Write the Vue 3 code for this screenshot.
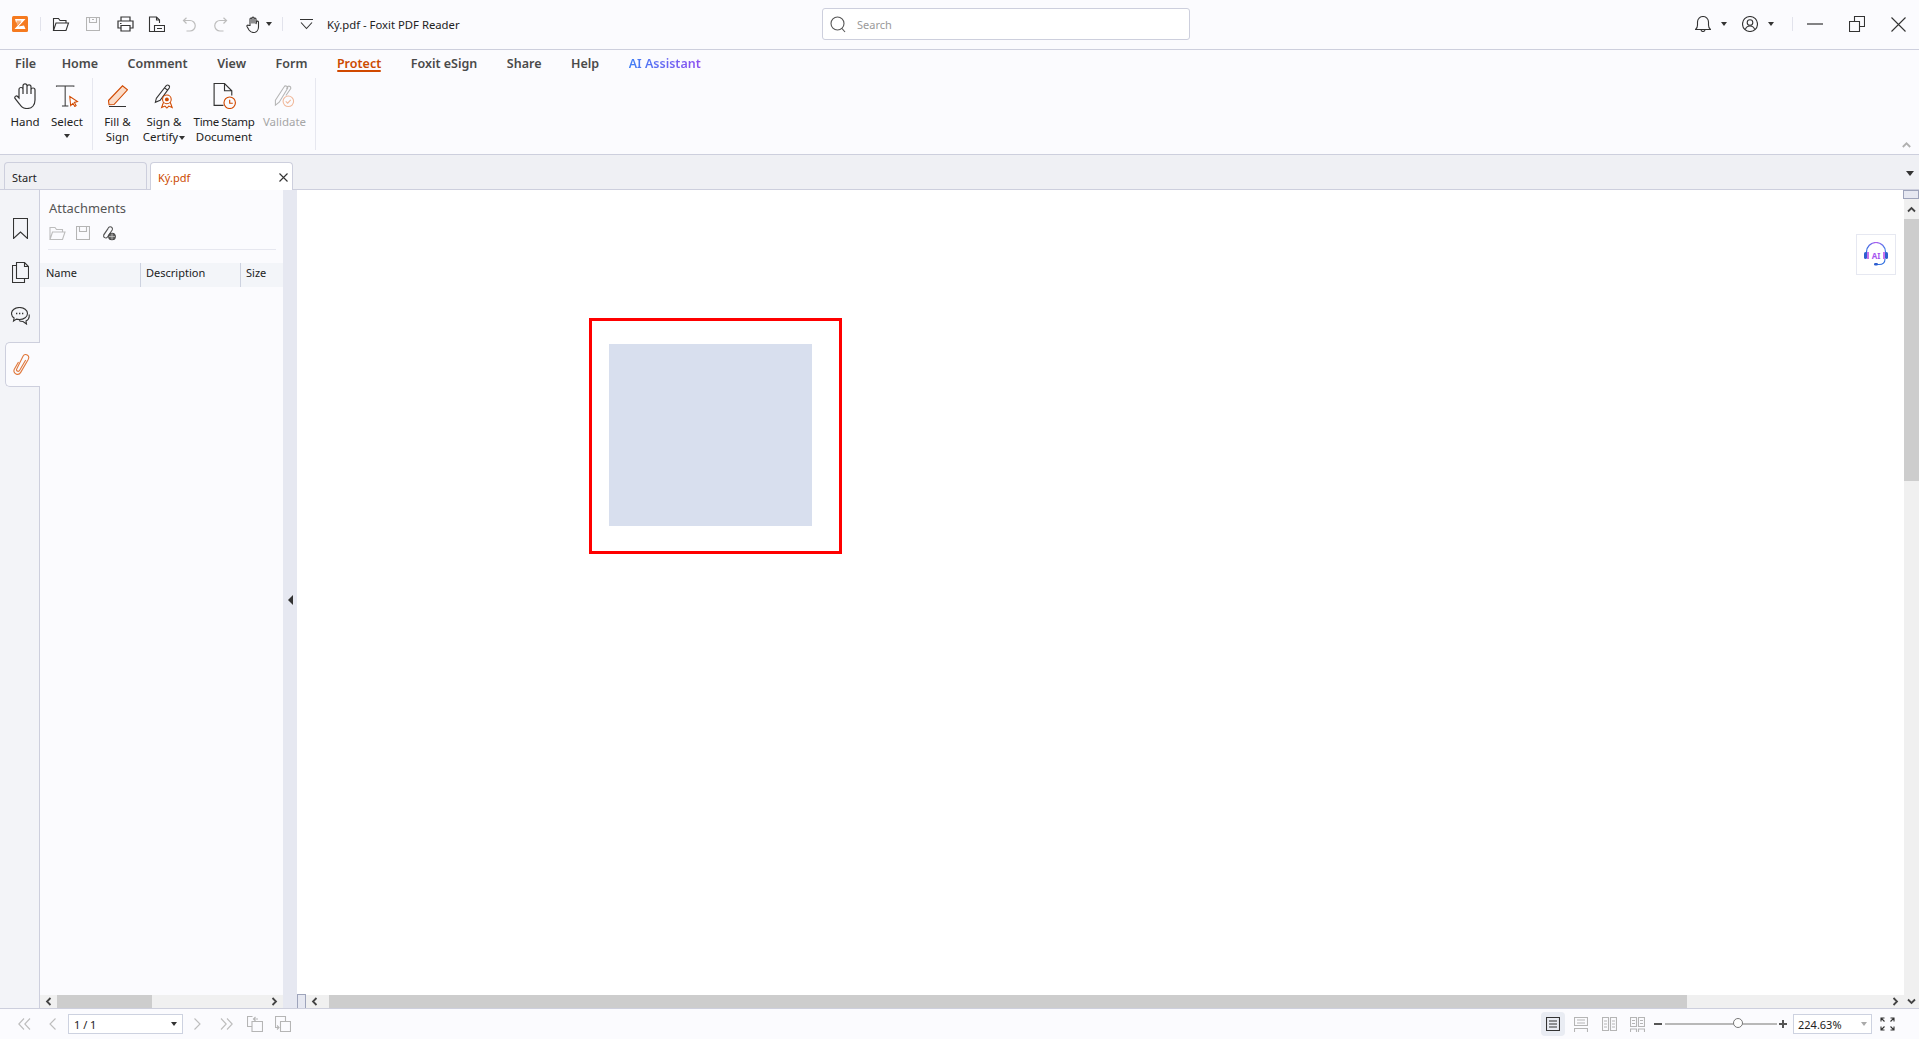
<script setup>
const menus = ["File", "Home", "Comment", "View", "Form", "Protect", "Foxit eSign", "Share", "Help"];
const columns = [
  { label: "Name", width: 101 },
  { label: "Description", width: 100 },
  { label: "Size", width: 42 },
];
</script>

<template>
  <div class="app">
    <!-- title bar -->
    <header class="titlebar">
      <svg class="logo" width="16" height="16" viewBox="0 0 16 16">
        <rect width="16" height="16" rx="1.5" fill="#f57a1f" />
        <path d="M3 3h10.500L6.500 10.500 12 9.500 13.500 13H2.500L9.500 5.500 4 6.500Z" fill="#fff" />
        <path d="M4.500 4.600h5L5 9.500Z" fill="#f9b27c" />
      </svg>
      <span class="vsep sep-a"></span>
      <svg class="ti open" width="18" height="16" viewBox="0 0 18 16" fill="none" stroke="#333" stroke-width="1.1">
        <path d="M1.500 14.500V2.500h5l1.500 2h6v2.500" />
        <path d="M1.500 14.500 4 7h12.500l-2.500 7.500Z" />
      </svg>
      <svg class="ti save" width="14" height="14" viewBox="0 0 14 14" fill="none" stroke="#b5b5b5" stroke-width="1.1">
        <path d="M.5.500h13v13H.5Z" />
        <path d="M3.500.500v5h7v-5M6 2.500h2" />
      </svg>
      <svg class="ti print" width="17" height="16" viewBox="0 0 17 16" fill="none" stroke="#333" stroke-width="1.2">
        <path d="M4 5V1h9v4M4 12H1V5h15v7h-3" />
        <path d="M4 9.500h9V15H4ZM3 7.500h1.500" />
      </svg>
      <svg class="ti props" width="17" height="17" viewBox="0 0 17 17" fill="none" stroke="#333" stroke-width="1.1">
        <path d="M6 15.500H1.500V1h7l3 3v3" />
        <path d="M8.500 1v3h3M6.500 9.500h10v6h-10ZM9 12.500h5" />
      </svg>
      <svg class="ti undo" width="14" height="15" viewBox="0 0 14 15" fill="none" stroke="#bdbdbd" stroke-width="1.2">
        <path d="M4.500 14H8a5.200 5.200 0 0 0 0-10.500H1.500M4.500.800 1.500 3.500 4.500 6.500" />
      </svg>
      <svg class="ti redo" width="14" height="15" viewBox="0 0 14 15" fill="none" stroke="#bdbdbd" stroke-width="1.2">
        <path d="M9.500 14H6a5.200 5.200 0 0 1 0-10.500h6.500M9.500.800l3 2.700-3 3" />
      </svg>
      <svg class="ti touch" width="14" height="17" viewBox="0 0 14 17" fill="none" stroke="#333" stroke-width="1.1">
        <path d="M4 9.500V3a1 1 0 0 1 2 0v4.500V2a1 1 0 0 1 2 0v5.500V3a1 1 0 0 1 2 0v5l.5-2a1 1 0 0 1 2 .3V11c0 3-2 5.500-5 5.500-2.500 0-3.500-1-4.500-2.500L1 10.500c-.5-1 1-2 1.800-1Z" />
      </svg>
      <span class="caret touch-caret"></span>
      <span class="vsep sep-b"></span>
      <svg class="ti more" width="13" height="11" viewBox="0 0 13 11" fill="none" stroke="#333" stroke-width="1.1">
        <path d="M0 .5h13M1 3.500l5.500 6 5.500-6" />
      </svg>
      <span class="doc-title">Ký.pdf - Foxit PDF Reader</span>

      <label class="search">
        <svg width="16" height="17" viewBox="0 0 16 17" fill="none" stroke="#555" stroke-width="1.1">
          <circle cx="7.500" cy="7.500" r="6.500" /><path d="m12 12.500 3 3.500" />
        </svg>
        <span>Search</span>
      </label>

      <div class="win-right">
        <svg width="16" height="16" viewBox="0 0 16 16" fill="none" stroke="#333" stroke-width="1.1">
          <path d="M.5 13.500h15c-1.500-1-2-2.500-2-4.500V6A5.500 5.500 0 0 0 2.500 6v3c0 2-.5 3.500-2 4.500ZM6 13.500a2 2 0 0 0 4 0" />
        </svg>
        <span class="caret bell-caret"></span>
        <svg class="user" width="16" height="16" viewBox="0 0 16 16" fill="none" stroke="#333" stroke-width="1.1">
          <circle cx="8" cy="8" r="7.500" /><circle cx="8" cy="6.500" r="2.800" /><path d="M3.300 13.500c.7-2.200 2.500-3.500 4.700-3.500s4 1.300 4.700 3.500" />
        </svg>
        <span class="caret user-caret"></span>
        <span class="vsep sep-c"></span>
        <svg class="min" width="16" height="2" viewBox="0 0 16 2"><path d="M0 1h16" stroke="#333" stroke-width="1.200" /></svg>
        <svg class="restore" width="16" height="16" viewBox="0 0 16 16" fill="none" stroke="#333" stroke-width="1.100">
          <path d="M.5 5.500h10v10H.5ZM5.500 5.500v-5h10v10h-5" />
        </svg>
        <svg class="close" width="15" height="15" viewBox="0 0 15 15" fill="none" stroke="#333" stroke-width="1.100">
          <path d="m.5.500 14 14M14.500.500l-14 14" />
        </svg>
      </div>
    </header>

    <!-- menu -->
    <nav class="menu">
      <span v-for="m in menus" :key="m" class="menu-item" :class="{ active: m === 'Protect', home: m === 'Home' }">{{ m }}</span>
      <span class="menu-item ai">AI Assistant</span>
    </nav>

    <!-- ribbon -->
    <section class="ribbon">
      <div class="rbtn w34">
        <span class="ico">
          <svg width="22" height="26" viewBox="0 0 22 26" fill="none" stroke="#333" stroke-width="1.200">
            <path d="M5 15V6.500a2 2 0 0 1 4 0V11V2.800a2 2 0 0 1 4 0V11V3.800a2 2 0 0 1 4 0V11V7a2 2 0 0 1 4 0V17c0 5-3 8.500-8 8.500-3.500 0-5.800-1.500-7.500-4.500L1 15.500c-.9-1.700 1.300-3.300 2.600-2L5 15Z" />
          </svg>
        </span>
        <span class="lbl">Hand</span>
      </div>
      <div class="rbtn w34">
        <span class="ico">
          <svg width="24" height="22" viewBox="0 0 25 24" fill="none">
            <path d="M1 2V1h19v1M10.500 1v22M7 23h7" stroke="#333" stroke-width="1.100" />
            <path d="M15.500 12.500 24 18l-3.500 1 2 3.500-1.500 1-2-3.500-2.500 2.500Z" stroke="#d14900" stroke-width="1.100" fill="#fff" />
          </svg>
        </span>
        <span class="lbl">Select</span>
        <span class="caret select-caret"></span>
      </div>
      <span class="rsep"></span>
      <div class="rbtn w33">
        <span class="ico">
          <svg width="20" height="22" viewBox="0 0 20 22" fill="none">
            <path d="M.5 15.500 14.500.800l5 4L6 19.500l-5 .2Z" stroke="#d14900" stroke-width="1.100" fill="#fbdcc8" />
            <path d="M1 21.500h17" stroke="#333" stroke-width="1" />
          </svg>
        </span>
        <span class="lbl">Fill &amp;<br />Sign</span>
      </div>
      <div class="rbtn w44">
        <span class="ico">
          <svg width="20" height="25" viewBox="0 0 20 26" fill="none" stroke-width="1.100">
            <path d="M2 15 12.500 1.500a2 2 0 0 1 3 2.500L6 17l-5 2Z M10.500 4l3.500 2.500" stroke="#333" />
            <circle cx="13" cy="16" r="4.500" stroke="#d14900" />
            <circle cx="13" cy="16" r="2" fill="#d14900" />
            <path d="m9.500 19-2 5.500 3.500-1.500 2 2 2-2 3.500 1.500-2-5.500" stroke="#d14900" />
          </svg>
        </span>
        <span class="lbl">Sign &amp;<br />Certify<i class="caret inline"></i></span>
      </div>
      <div class="rbtn w60">
        <span class="ico">
          <svg width="23" height="26" viewBox="0 0 22 25" fill="none" stroke-width="1.100">
            <path d="M10 21.500H1V.5h10l7 7V12M11 .5v7h7" stroke="#333" />
            <circle cx="16" cy="19" r="5.500" stroke="#d14900" />
            <path d="M16 16v3.500h3" stroke="#d14900" />
          </svg>
        </span>
        <span class="lbl"><span class="tight">Time Stamp</span><br />Document</span>
      </div>
      <div class="rbtn w45 off">
        <span class="ico">
          <svg width="21" height="23" viewBox="0 0 21 24" fill="none" stroke-width="1.100">
            <path d="M1 16 10 2a2 2 0 0 1 3.500 2L5 18l-4 3Zm11.500-12 1.500-2.500a2 2 0 0 1 3 2.200L12 11" stroke="#b5b5b5" />
            <circle cx="14.500" cy="17" r="5.500" stroke="#f0b89a" />
            <path d="m11.800 17 2 2 3.200-3.500" stroke="#f0b89a" />
          </svg>
        </span>
        <span class="lbl">Validate</span>
      </div>
      <span class="rsep"></span>
      <svg class="collapse" width="9" height="6" viewBox="0 0 9 6" fill="none" stroke="#b0b0b0" stroke-width="1.800">
        <path d="m.8 5 3.700-3.700L8.200 5" />
      </svg>
    </section>

    <!-- tabs -->
    <div class="tabs">
      <div class="tab">Start</div>
      <div class="tab current">
        <span>Ký.pdf</span>
        <svg width="9" height="9" viewBox="0 0 9 9" stroke="#333" stroke-width="1.100"><path d="m.5.500 8 8M8.500.500l-8 8" /></svg>
      </div>
      <span class="caret big tabs-caret"></span>
    </div>

    <!-- main area -->
    <main class="workspace">
      <aside class="rail">
        <div class="rail-item">
          <svg width="15" height="21" viewBox="0 0 15 21" fill="none" stroke="#333" stroke-width="1.100">
            <path d="M.5.500h14v20l-7-6.500-7 6.500Z" />
          </svg>
        </div>
        <div class="rail-item">
          <svg width="17" height="21" viewBox="0 0 17 21" fill="none" stroke="#333" stroke-width="1.100">
            <path d="M4.500 3.500H.5v17h12v-4" /><path d="M4.500.5h8l4 4v12h-12ZM12.500.5v4h4" />
          </svg>
        </div>
        <div class="rail-item">
          <svg width="19" height="18" viewBox="0 0 19 18" fill="none" stroke="#333" stroke-width="1.100">
            <path d="M8.500.5c4.400 0 8 2.700 8 6s-3.600 6-8 6c-1 0-2-.1-3-.4L2.500 14l.6-3C1.500 10 .5 8.300.5 6.500c0-3.300 3.600-6 8-6Z" />
            <path d="M18 7.500c.8 3-1 5.500-3 6.500l.5 3-3.500-2.500c-1.500 0-3-.3-4-1" />
            <path d="M5 6.500h1.300M8 6.500h1.300M11 6.500h1.300" stroke-width="1.500" />
          </svg>
        </div>
        <div class="rail-item current">
          <svg width="17" height="21" viewBox="0 0 17 21" fill="none" stroke="#e0783c" stroke-width="1.100">
            <path d="M5.500 8 1.300 15.200c-1 2 0 3.900 1.700 4.700 1.800.9 3.700.2 4.700-1.500l7.500-13c1-1.900.4-3.600-1-4.400-1.500-.8-3.200-.3-4.200 1.300L3.700 15c-.6 1 .1 1.900 1 2.200.8.300 1.500 0 2-.9l6-10.300" />
          </svg>
        </div>
      </aside>

      <section class="panel">
        <h2 class="panel-title">Attachments</h2>
        <div class="panel-tools">
          <svg width="17" height="14" viewBox="0 0 17 14" fill="none" stroke="#bdbdbd" stroke-width="1.100">
            <path d="M1 13.500V1.500h5l1.500 2h6V6M1 13.500 3.500 6H16l-2.500 7.500Z" />
          </svg>
          <svg width="14" height="14" viewBox="0 0 14 14" fill="none" stroke="#b5b5b5" stroke-width="1.100">
            <path d="M.5.500h13v13H.5Z" /><path d="M3.500.500v5h7v-5" />
          </svg>
          <svg width="14" height="15" viewBox="0 0 14 15" fill="none" stroke="#555" stroke-width="1.100">
            <path d="M1.500 9 6.500 1.700c1-1.300 2.600-1.200 3.500 0 .6.800.6 1.600.2 2.300L5.500 11c-.6 1-1.900 1.200-2.800.6C1.500 11 1.300 9.800 2 8.800L6 2.800" />
            <circle cx="10" cy="10.500" r="3.300" fill="#666" stroke="#444" />
            <path d="M7 10.500h6M10 7.500v6" stroke="#ddd" stroke-width=".6" />
          </svg>
        </div>
        <div class="panel-rule"></div>
        <div class="col-head">
          <span v-for="c in columns" :key="c.label" :style="{ width: c.width + 'px' }">{{ c.label }}</span>
        </div>
        <div class="panel-body"></div>
        <div class="hscroll">
          <svg class="arrow" width="7" height="9" viewBox="0 0 7 9" fill="none" stroke="#444" stroke-width="1.800"><path d="M5.500 1 2 4.500 5.500 8" /></svg>
          <span class="thumb panel-thumb"></span>
          <svg class="arrow push" width="7" height="9" viewBox="0 0 7 9" fill="none" stroke="#444" stroke-width="1.800"><path d="M1.500 1 5 4.500 1.500 8" /></svg>
        </div>
      </section>

      <div class="splitter">
        <span class="split-caret"></span>
      </div>

      <section class="doc">
        <div class="page">
          <div class="red-box">
            <div class="blue-box"></div>
          </div>
          <button class="ai-float">
            <svg width="26" height="26" viewBox="0 0 26 26" fill="none">
              <defs>
                <linearGradient id="aig" x1="0" y1="0" x2="1" y2="0">
                  <stop offset="0" stop-color="#2f6fe0" /><stop offset=".5" stop-color="#b45af0" /><stop offset="1" stop-color="#3c7be8" />
                </linearGradient>
              </defs>
              <path d="M3.500 12V10a9.500 9.500 0 0 1 19 0v2" stroke="url(#aig)" stroke-width="1.200" />
              <rect x="1" y="10" width="3" height="7" rx="1.500" fill="#2f5fd0" />
              <rect x="22" y="10" width="3" height="7" rx="1.500" fill="#2f5fd0" />
              <rect x="4" y="10" width="2" height="7" fill="#c873ee" />
              <rect x="20" y="10" width="2" height="7" fill="#c873ee" />
              <path d="M22 17c0 3-2 5.500-6 5.500h-4" stroke="#2f6fe0" stroke-width="1.100" />
              <rect x="11" y="21" width="4" height="2.500" rx="1.200" fill="#2f5fd0" />
              <text x="13" y="16.500" text-anchor="middle" class="ai-glyph">AI</text>
            </svg>
          </button>
        </div>
        <div class="hscroll doc-scroll">
          <span class="grip"></span>
          <svg class="arrow" width="7" height="9" viewBox="0 0 7 9" fill="none" stroke="#444" stroke-width="1.800"><path d="M5.500 1 2 4.500 5.500 8" /></svg>
          <span class="thumb doc-thumb"></span>
          <svg class="arrow push" width="7" height="9" viewBox="0 0 7 9" fill="none" stroke="#444" stroke-width="1.800"><path d="M1.500 1 5 4.500 1.500 8" /></svg>
        </div>
      </section>

      <div class="vscroll">
        <span class="vgrip"></span>
        <div class="vbtn">
          <svg width="9" height="7" viewBox="0 0 9 7" fill="none" stroke="#444" stroke-width="1.800"><path d="m1 5.500 3.500-3.500L8 5.500" /></svg>
        </div>
        <span class="vthumb"></span>
        <div class="vtrack"></div>
        <div class="vbtn low">
          <svg width="9" height="7" viewBox="0 0 9 7" fill="none" stroke="#444" stroke-width="1.800"><path d="m1 1.500 3.500 3.500L8 1.500" /></svg>
        </div>
      </div>
    </main>

    <!-- status bar -->
    <footer class="status">
      <svg class="sb first" width="13" height="12" viewBox="0 0 13 12" fill="none" stroke="#bdbdbd" stroke-width="1.100"><path d="M6 .5.800 6 6 11.500M12 .5 6.800 6 12 11.500" /></svg>
      <svg class="sb prev" width="7" height="12" viewBox="0 0 7 12" fill="none" stroke="#bdbdbd" stroke-width="1.100"><path d="M6.500.5 1 6l5.500 5.500" /></svg>
      <div class="pageno"><span>1 / 1</span><span class="caret"></span></div>
      <svg class="sb next" width="7" height="12" viewBox="0 0 7 12" fill="none" stroke="#bdbdbd" stroke-width="1.100"><path d="M.5.500 6 6l-5.500 5.500" /></svg>
      <svg class="sb last" width="13" height="12" viewBox="0 0 13 12" fill="none" stroke="#bdbdbd" stroke-width="1.100"><path d="M1 .5 6.200 6 1 11.500M7 .5 12.200 6 7 11.500" /></svg>
      <svg class="sb back" width="16" height="16" viewBox="0 0 16 16" fill="none" stroke="#b5b5b5" stroke-width="1.100"><path d="M5 10.500H.5V.5h5M5 5.500h10.500v10H5ZM11 3H7m1.500-2L6.500 3l2 2" /></svg>
      <svg class="sb forward" width="16" height="16" viewBox="0 0 16 16" fill="none" stroke="#b5b5b5" stroke-width="1.100"><path d="M.5 5.500v-5h10v5M5.500 5.500h10v10h-10ZM.5 5.500v6h3M2 9.500l2 2-2 2" /></svg>

      <div class="status-right">
        <button class="view on">
          <svg width="14" height="14" viewBox="0 0 14 14" fill="none" stroke="#333" stroke-width="1.100"><path d="M.5.500h13v13H.5ZM3 4h8M3 7h8M3 10h8" /></svg>
        </button>
        <button class="view">
          <svg width="14" height="15" viewBox="0 0 14 15" fill="none" stroke="#b5b5b5" stroke-width="1.100"><path d="M.5 .5h13v8H.5ZM3 3h8M3 6h8M.5 15v-3.500h13V15" /></svg>
        </button>
        <button class="view">
          <svg width="15" height="14" viewBox="0 0 15 14" fill="none" stroke="#b5b5b5" stroke-width="1.100"><path d="M.5.500h6v13h-6ZM8.500.500h6v13h-6ZM2 4h3M2 7h3M2 10h3M10 4h3M10 7h3M10 10h3" /></svg>
        </button>
        <button class="view">
          <svg width="15" height="15" viewBox="0 0 15 15" fill="none" stroke="#b5b5b5" stroke-width="1.100"><path d="M.5.500h6v9h-6ZM8.500.500h6v9h-6ZM2 3.500h3M2 6.500h3M10 3.500h3M10 6.500h3M.5 15v-3h6v3M8.500 15v-3h6v3" /></svg>
        </button>
        <span class="zoom-minus"></span>
        <div class="slider"><span class="knob"></span></div>
        <span class="zoom-plus"></span>
        <div class="zoomval"><span>224.63%</span><span class="caret pale"></span></div>
        <svg class="full" width="15" height="14" viewBox="0 0 15 14" fill="none" stroke="#333" stroke-width="1.100"><path d="M1 4.500V1h3.500M1 1l3.500 3.500M14 4.500V1h-3.500M14 1l-3.500 3.500M1 9.500V13h3.500M1 13l3.500-3.500M14 9.500V13h-3.500M14 13l-3.500-3.500" /></svg>
      </div>
    </footer>
  </div>
</template>

<style scoped>
.app {
  display: flex;
  flex-direction: column;
  height: 100vh;
  overflow: hidden;
  background: #fbfbfe;
  color: #222;
  font-family: "Noto Sans", "Open Sans", Arial, sans-serif;
  font-size: 11.5px;
}

/* small triangle used everywhere */
.caret {
  display: inline-block;
  width: 0;
  height: 0;
  border-left: 3.5px solid transparent;
  border-right: 3.5px solid transparent;
  border-top: 4px solid #333;
}
.caret.big {
  border-left-width: 4.5px;
  border-right-width: 4.5px;
  border-top-width: 5px;
}
.caret.pale {
  border-top-color: #aaa;
}
.caret.inline {
  margin-left: 1px;
  vertical-align: middle;
}

.vsep {
  width: 1px;
  height: 14px;
  background: #e2e3ec;
}

.titlebar {
  height: 50px;
  flex: none;
  display: flex;
  align-items: center;
  border-bottom: 1px solid #cdcfdd;
  box-sizing: border-box;
  padding-left: 12px;
  padding-bottom: 1px;
}
.sep-a { margin-left: 12px; }
.ti { flex: none; }
.open { margin-left: 11px; }
.save { margin-left: 16px; }
.print { margin-left: 17px; }
.props { margin-left: 14px; }
.undo { margin-left: 17px; }
.redo { margin-left: 18px; }
.touch { margin-left: 18px; }
.touch-caret { margin-left: 6px; }
.sep-b { margin-left: 10px; }
.more { margin-left: 17px; }
.doc-title {
  margin-left: 14px;
  font-size: 11.3px;
  color: #222;
  width: 495px;
  white-space: nowrap;
}
.search {
  width: 368px;
  height: 32px;
  box-sizing: border-box;
  display: flex;
  align-items: center;
  gap: 11px;
  padding-left: 7px;
  background: #fff;
  border: 1px solid #cdcfdd;
  border-radius: 3px;
  color: #9a9a9a;
  font-size: 11px;
}
.win-right {
  margin-left: auto;
  display: flex;
  align-items: center;
  padding-right: 13px;
}
.bell-caret { margin-left: 10px; }
.user { margin-left: 15px; }
.user-caret { margin-left: 10px; }
.sep-c { margin-left: 18px; }
.min { margin-left: 14px; }
.restore { margin-left: 26px; }
.close { margin-left: 26px; }

.menu {
  height: 25px;
  flex: none;
  display: flex;
  gap: 29.5px;
  padding-left: 15px;
  font-size: 12.5px;
  font-weight: 600;
  color: #4a4a4a;
}
.menu-item {
  position: relative;
  line-height: 27px;
  white-space: nowrap;
}
.menu-item.home {
  margin-left: -4px;
}
.menu-item.active {
  color: #cc4a00;
}
.menu-item.active::after {
  content: "";
  position: absolute;
  left: 0;
  right: 0;
  bottom: 3px;
  height: 2px;
  background: #d14900;
  border-radius: 1px;
}
.menu-item.ai {
  background: linear-gradient(90deg, #3f7ff5, #8f4ff0);
  -webkit-background-clip: text;
  background-clip: text;
  color: transparent;
}

.ribbon {
  height: 80px;
  flex: none;
  display: flex;
  gap: 8px;
  padding: 3px 0 4px 8px;
  box-sizing: border-box;
  border-bottom: 1px solid #cdcfdd;
  position: relative;
}
.rbtn {
  display: flex;
  flex-direction: column;
  align-items: center;
  line-height: 15px;
  font-size: 11.5px;
  white-space: nowrap;
  text-align: center;
}
.ico {
  height: 33px;
  box-sizing: border-box;
  padding-top: 3px;
  margin-bottom: 3px;
  display: flex;
  align-items: center;
  flex: none;
}
.tight {
  letter-spacing: -0.3px;
  word-spacing: -0.5px;
}
.w33 { width: 33px; }
.w34 { width: 34px; }
.w44 { width: 44px; }
.w45 { width: 45px; }
.w60 { width: 60px; }
.off { color: #a6a6a6; }
.select-caret {
  margin-top: 5px;
}
.rsep {
  width: 1px;
  background: #e6e7ef;
}
.collapse {
  position: absolute;
  right: 8px;
  bottom: 6px;
}

.tabs {
  height: 35px;
  flex: none;
  display: flex;
  align-items: flex-end;
  gap: 3px;
  padding-left: 4px;
  padding-right: 5px;
  background: #eff0f4;
  border-bottom: 1px solid #cdcfdd;
  box-sizing: border-box;
}
.tab {
  width: 143px;
  height: 27px;
  box-sizing: border-box;
  display: flex;
  align-items: center;
  justify-content: space-between;
  padding: 3px 4px 0 7px;
  border: 1px solid #cdcfdd;
  border-bottom: none;
  border-radius: 4px 4px 0 0;
  font-size: 11px;
}
.tab.current {
  height: 28px;
  margin-bottom: -1px;
  background: #fff;
  color: #cc4a00;
  padding-top: 2px;
}
.tabs-caret {
  margin-left: auto;
  align-self: center;
  margin-top: 2px;
}

.workspace {
  flex: 1;
  min-height: 0;
  display: flex;
}
.rail {
  width: 40px;
  flex: none;
  box-sizing: border-box;
  padding-top: 16px;
  padding-left: 2px;
  background: #f3f4f8;
  border-right: 1px solid #cdcfdd;
}
.rail-item {
  height: 44px;
  display: flex;
  align-items: center;
  justify-content: center;
}
.rail-item.current {
  height: 45px;
  margin: 4px -1px 0 3px;
  padding-right: 3px;
  box-sizing: border-box;
  background: #fbfbfe;
  border: 1px solid #cdcfdd;
  border-right: none;
  border-radius: 5px 0 0 5px;
}

.panel {
  width: 243px;
  flex: none;
  display: flex;
  flex-direction: column;
  background: #fbfbfe;
}
.panel-title {
  margin: 9px 0 0 9px;
  font-size: 12.9px;
  font-weight: 400;
  line-height: 18px;
  color: #555;
}
.panel-tools {
  display: flex;
  align-items: center;
  gap: 10px;
  height: 16px;
  margin: 8px 0 0 9px;
}
.panel-tools svg:last-child {
  margin-left: 2px;
}
.panel-rule {
  height: 1px;
  margin: 8px 7px 0 8px;
  background: #e6e7ef;
}
.col-head {
  display: flex;
  height: 24px;
  margin-top: 13px;
  background: #f3f5f9;
  line-height: 20px;
  font-size: 11px;
  color: #222;
}
.col-head span {
  box-sizing: border-box;
  padding-left: 5px;
  border-right: 1px solid #cdd2e0;
}
.col-head span:first-child {
  padding-left: 6px;
}
.col-head span:last-child {
  border-right: none;
}
.panel-body {
  flex: 1;
}

.hscroll {
  height: 13px;
  flex: none;
  display: flex;
  align-items: center;
  background: #f0f0f0;
}
.arrow {
  flex: none;
  margin: 0 5px;
}
.push {
  margin-left: auto;
  margin-right: 5px;
}
.thumb {
  height: 100%;
  background: #cdcdcd;
}
.panel-thumb {
  width: 95px;
  margin-left: 0;
}
.splitter {
  width: 14px;
  flex: none;
  background: #e6e8f1;
  display: flex;
  align-items: center;
  padding-left: 5px;
  box-sizing: border-box;
}
.split-caret {
  width: 0;
  height: 0;
  margin-top: 2px;
  border-top: 5px solid transparent;
  border-bottom: 5px solid transparent;
  border-right: 5px solid #333;
}

.doc {
  flex: 1;
  min-width: 0;
  display: flex;
  flex-direction: column;
  background: #fff;
}
.page {
  flex: 1;
  position: relative;
  min-height: 0;
  padding: 128px 0 0 292px;
}
.red-box {
  width: 253px;
  height: 236px;
  box-sizing: border-box;
  border: 3px solid #ff0000;
  padding: 23px 0 0 17px;
}
.blue-box {
  width: 203px;
  height: 182px;
  background: #d8dfee;
}
.ai-float {
  position: absolute;
  top: 44px;
  right: 8px;
  width: 40px;
  height: 41px;
  padding: 0;
  background: #fff;
  border: 1px solid #e6e8f1;
  display: flex;
  align-items: center;
  justify-content: center;
}
.ai-glyph {
  font-family: "Noto Sans", sans-serif;
  font-size: 8px;
  font-weight: 700;
  fill: #a855f0;
}
.doc-scroll .grip {
  width: 9px;
  height: 14px;
  box-sizing: border-box;
  background: #e6e8f1;
  border: 1px solid #9ea4bb;
  border-bottom: none;
  margin-top: -1px;
  flex: none;
}
.doc-thumb {
  width: 1358px;
  margin-left: 6px;
}

.vscroll {
  width: 15px;
  flex: none;
  display: flex;
  flex-direction: column;
  background: #f0f0f0;
  position: relative;
}
.vgrip {
  height: 9px;
  width: 16px;
  flex: none;
  margin-left: -1px;
  box-sizing: border-box;
  background: #e6e8f1;
  border: 1px solid #9ea4bb;
}
.vbtn {
  height: 20px;
  flex: none;
  display: flex;
  align-items: center;
  justify-content: center;
}
.vbtn.low {
  height: 13px;
}
.vthumb {
  height: 262px;
  flex: none;
  background: #cdcdcd;
}
.vtrack {
  flex: 1;
}

.status {
  height: 31px;
  flex: none;
  box-sizing: border-box;
  display: flex;
  align-items: center;
  border-top: 1px solid #cdcfdd;
  background: #fbfbfe;
  padding-left: 18px;
}
.sb { flex: none; }
.prev { margin-left: 18px; }
.pageno, .zoomval {
  display: flex;
  align-items: center;
  justify-content: space-between;
  box-sizing: border-box;
  height: 20px;
  background: #fff;
  border: 1px solid #cdd2e0;
  font-size: 11px;
}
.pageno {
  width: 115px;
  margin-left: 12px;
  padding: 0 5px;
}
.next { margin-left: 11px; }
.last { margin-left: 19px; }
.back { margin-left: 14px; }
.forward { margin-left: 12px; }

.status-right {
  margin-left: auto;
  display: flex;
  align-items: center;
  padding-right: 24px;
}
.view {
  width: 24px;
  height: 24px;
  padding: 0;
  margin-right: 4px;
  background: none;
  border: none;
  border-radius: 4px;
  display: flex;
  align-items: center;
  justify-content: center;
}
.view.on {
  background: #e9ecf3;
}
.zoom-minus, .zoom-plus {
  position: relative;
  width: 8px;
  height: 2px;
  background: #555;
  flex: none;
}
.zoom-minus {
  margin-left: 1px;
}
.zoom-plus::after {
  content: "";
  position: absolute;
  left: 3px;
  top: -3px;
  width: 2px;
  height: 8px;
  background: #555;
}
.slider {
  position: relative;
  width: 112px;
  height: 2px;
  margin: 0 2px 0 3px;
  background: #b8b8b8;
}
.knob {
  position: absolute;
  left: 68px;
  top: -5px;
  width: 10px;
  height: 10px;
  box-sizing: border-box;
  background: #fff;
  border: 1px solid #777;
  border-radius: 50%;
}
.zoomval {
  width: 79px;
  margin-left: 6px;
  padding: 0 4px;
}
.full {
  margin-left: 8px;
}
</style>

<style>
html, body {
  margin: 0;
  padding: 0;
}
</style>
